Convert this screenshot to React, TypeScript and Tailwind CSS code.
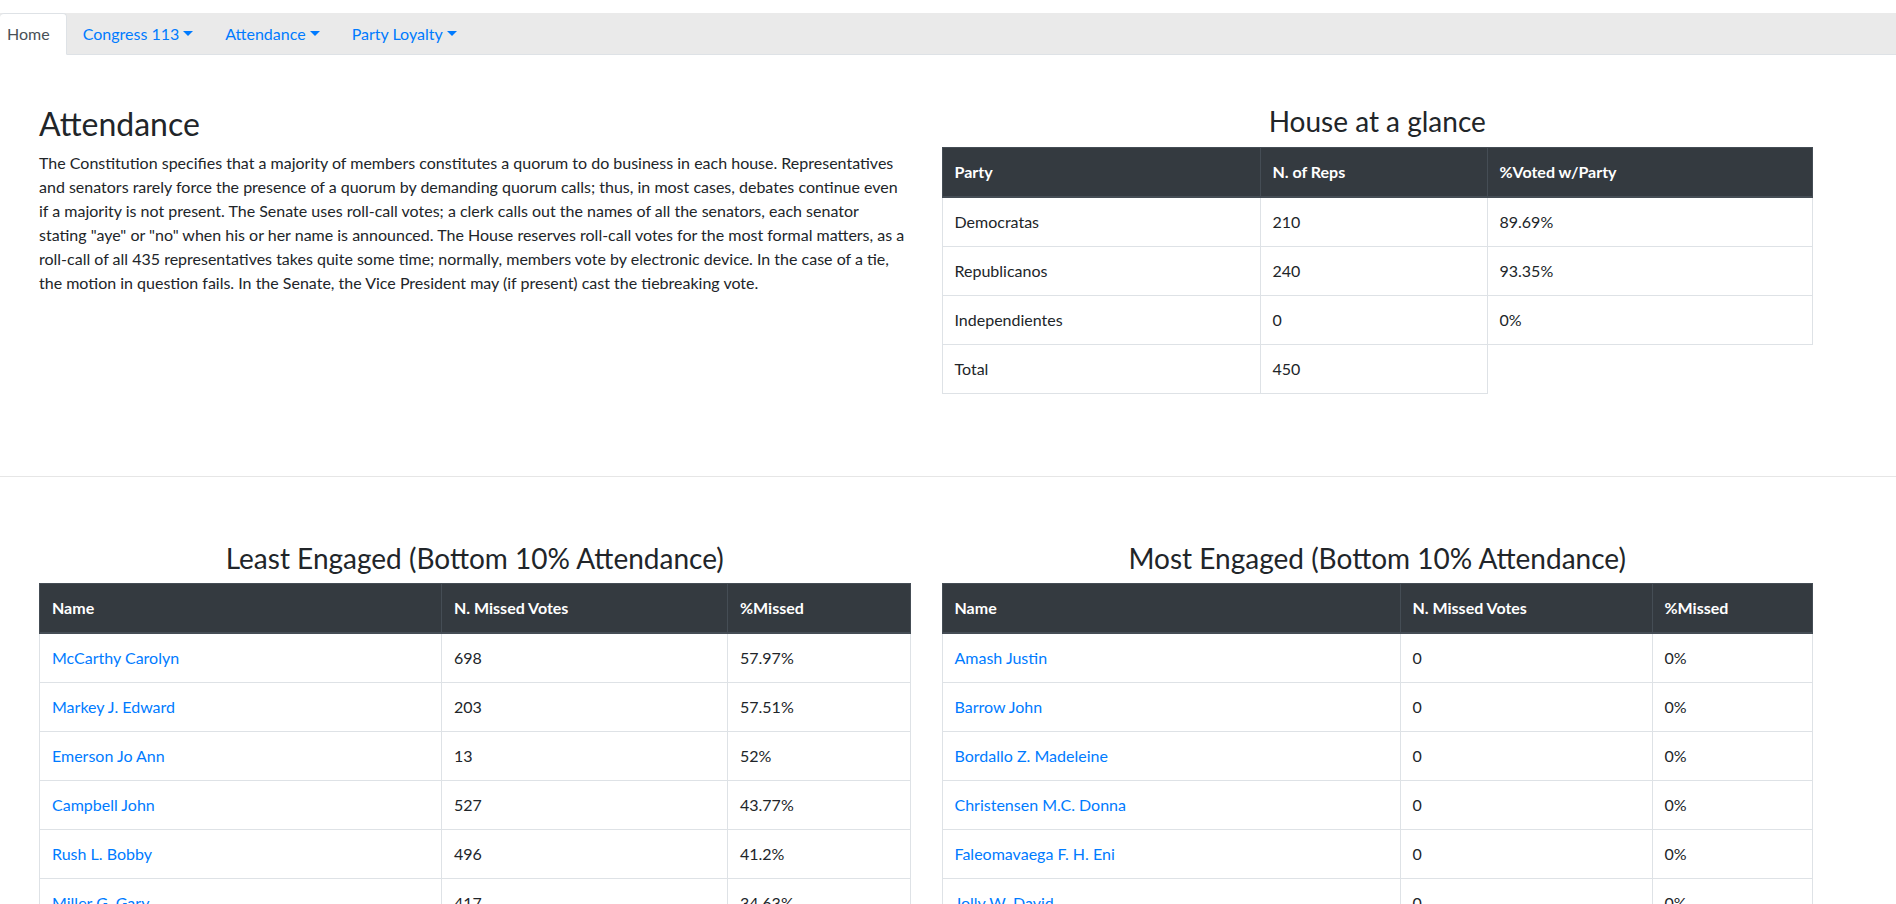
import React from "react";

type Row = { name: string; votes: number; pct: string };

const INTRO_LINES = [
  "The Constitution specifies that a majority of members constitutes a quorum to do business in each house. Representatives",
  "and senators rarely force the presence of a quorum by demanding quorum calls; thus, in most cases, debates continue even",
  'if a majority is not present. The Senate uses roll-call votes; a clerk calls out the names of all the senators, each senator',
  'stating "aye" or "no" when his or her name is announced. The House reserves roll-call votes for the most formal matters, as a',
  "roll-call of all 435 representatives takes quite some time; normally, members vote by electronic device. In the case of a tie,",
  "the motion in question fails. In the Senate, the Vice President may (if present) cast the tiebreaking vote.",
];

const GLANCE = [
  { party: "Democratas", reps: "210", pct: "89.69%" },
  { party: "Republicanos", reps: "240", pct: "93.35%" },
  { party: "Independientes", reps: "0", pct: "0%" },
];

const LEAST: Row[] = [
  { name: "McCarthy Carolyn", votes: 698, pct: "57.97%" },
  { name: "Markey J. Edward", votes: 203, pct: "57.51%" },
  { name: "Emerson Jo Ann", votes: 13, pct: "52%" },
  { name: "Campbell John", votes: 527, pct: "43.77%" },
  { name: "Rush L. Bobby", votes: 496, pct: "41.2%" },
  { name: "Miller G. Gary", votes: 417, pct: "34.63%" },
];

const MOST: Row[] = [
  { name: "Amash Justin", votes: 0, pct: "0%" },
  { name: "Barrow John", votes: 0, pct: "0%" },
  { name: "Bordallo Z. Madeleine", votes: 0, pct: "0%" },
  { name: "Christensen M.C. Donna", votes: 0, pct: "0%" },
  { name: "Faleomavaega F. H. Eni", votes: 0, pct: "0%" },
  { name: "Jolly W. David", votes: 0, pct: "0%" },
];

const TH = "border border-b-2 border-[#454d55] bg-[#343a40] p-3 text-left font-bold leading-6 text-white";
const TD = "border border-[#dee2e6] p-3 leading-6";

const Caret = () => (
  <span className="ml-[4px] inline-block h-0 w-0 border-x-[5px] border-t-[5px] border-x-transparent border-t-current align-[0.255em]" />
);

const NavItem = ({ label }: { label: string }) => (
  <a href="#" className="-mb-px border-t border-transparent px-4 py-2 leading-6 text-[#007bff]">
    {label}
    <Caret />
  </a>
);

const EngagementTable = ({ title, rows, cols }: { title: string; rows: Row[]; cols: string[] }) => (
  <div>
    <h3 className="mb-2 text-center text-[28px] leading-[1.2]">{title}</h3>
    <table className="w-full table-fixed border-collapse">
      <colgroup>
        <col className={cols[0]} />
        <col className={cols[1]} />
        <col className={cols[2]} />
      </colgroup>
      <thead>
        <tr>
          <th className={TH}>Name</th>
          <th className={TH}>N. Missed Votes</th>
          <th className={TH}>%Missed</th>
        </tr>
      </thead>
      <tbody>
        {rows.map((r) => (
          <tr key={r.name}>
            <td className={TD}>
              <a href="#" className="text-[#007bff]">
                {r.name}
              </a>
            </td>
            <td className={TD}>{r.votes}</td>
            <td className={TD}>{r.pct}</td>
          </tr>
        ))}
      </tbody>
    </table>
  </div>
);

export default function App() {
  return (
    <div className="min-h-screen bg-white font-[Lato,'Liberation_Sans',sans-serif] text-base text-[#212529]">
      {/* tabs */}
      <nav className="mt-[13px] flex border-b border-[#dee2e6] bg-[#eaeaea]">
        <a
          href="#"
          className="-mb-px rounded-t-[4px] border border-l-0 border-[#dee2e6] border-b-white bg-white py-2 pl-[7px] pr-4 leading-6 text-[#495057]"
        >
          Home
        </a>
        <NavItem label="Congress 113" />
        <NavItem label="Attendance" />
        <NavItem label="Party Loyalty" />
      </nav>

      {/* intro + glance */}
      <section className="ml-[39px] grid w-[1774px] grid-cols-2 gap-x-[31px] pb-[82px] pt-[50px]">
        <div>
          <h2 className="mb-2 text-[32px] leading-[1.2]">Attendance</h2>
          <p className="leading-6">
            {INTRO_LINES.map((line, i) => (
              <span key={i} className="block whitespace-nowrap">
                {line}
              </span>
            ))}
          </p>
        </div>
        <div>
          <h3 className="mb-2 text-center text-[28px] leading-[1.2]">House at a glance</h3>
          <table className="w-full table-fixed border-collapse">
            <colgroup>
              <col className="w-[318px]" />
              <col className="w-[227px]" />
              <col />
            </colgroup>
            <thead>
              <tr>
                <th className={TH}>Party</th>
                <th className={TH}>N. of Reps</th>
                <th className={TH}>%Voted w/Party</th>
              </tr>
            </thead>
            <tbody>
              {GLANCE.map((g) => (
                <tr key={g.party}>
                  <td className={TD}>{g.party}</td>
                  <td className={TD}>{g.reps}</td>
                  <td className={TD}>{g.pct}</td>
                </tr>
              ))}
              <tr>
                <td className={TD}>Total</td>
                <td className={TD}>450</td>
              </tr>
            </tbody>
          </table>
        </div>
      </section>

      <hr className="border-t border-[#e6e6e6]" />

      {/* engagement tables */}
      <section className="ml-[39px] grid w-[1774px] grid-cols-2 gap-x-[31px] pb-12 pt-[65px]">
        <EngagementTable title="Least Engaged (Bottom 10% Attendance)" rows={LEAST} cols={["w-[402px]", "w-[286px]", ""]} />
        <EngagementTable title="Most Engaged (Bottom 10% Attendance)" rows={MOST} cols={["w-[458px]", "w-[252px]", ""]} />
      </section>
    </div>
  );
}
